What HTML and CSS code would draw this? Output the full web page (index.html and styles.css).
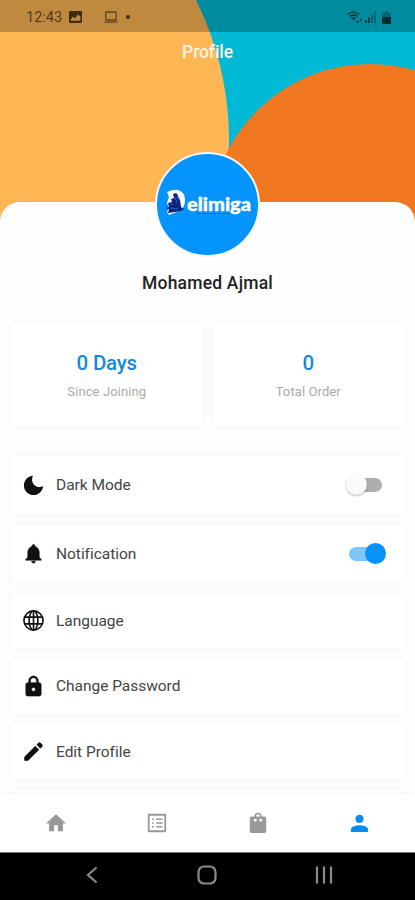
FILE: index.html
```
<!DOCTYPE html>
<html lang="en">
<head>
    <meta charset="UTF-8">
    <title>Profile</title>
    <link rel="stylesheet" href="styles.css">
</head>
<body>
<div class="screen">
    <header class="header">
        <svg class="header-art" viewBox="0 0 415 235" aria-hidden="true">
            <rect width="415" height="235" fill="#00bad5"/>
            <circle cx="-84" cy="140" r="313" fill="#ffb755"/>
            <circle cx="370" cy="224" r="160" fill="#f07821"/>
        </svg>
        <div class="status-bar">
            <span class="status-time">12:43</span>
            <svg class="status-picture" width="13" height="12" viewBox="0 0 13 12">
                <path fill="currentColor" fill-rule="evenodd" d="M1.3 0h10.4Q13 0 13 1.3v9.4Q13 12 11.7 12H1.3Q0 12 0 10.7V1.3Q0 0 1.3 0zM1.8 9.8h9.6V5.5L9 3.6 6 7.4 4 5.6 1.8 8.2z"/>
            </svg>
            <svg class="status-laptop" width="14" height="12" viewBox="0 0 14 12" fill="none" stroke="currentColor" stroke-width="1.3">
                <rect x="1.7" y="1" width="10.6" height="8" rx="1"/>
                <path d="M.5 11h13"/>
            </svg>
            <span class="status-dot"></span>
            <div class="status-right">
                <svg width="17" height="13" viewBox="0 0 17 13" fill="none" stroke="currentColor" stroke-width="1.3">
                    <path d="M.7 3.6Q6.5-1.2 12.3 3.6M2.7 5.5q3.8-3 7.6 0M4.6 7.4q1.9-1.5 3.8 0"/>
                    <path fill="currentColor" stroke="none" d="M5.3 8.2h2.5L6.6 9.8zM9 10h3l-1.5 2.4zM12.4 9.8h3l-1.5-2.4z"/>
                </svg>
                <svg width="11" height="12" viewBox="0 0 11 12" fill="currentColor">
                    <path opacity=".8" d="M0 9h2v3H0zM3 6.500h2V12H3z"/>
                    <path opacity=".4" d="M6 3.500h2V12H6zM9 0h2v12H9z"/>
                </svg>
                <svg class="status-battery" width="9" height="13" viewBox="0 0 9 13" fill="currentColor">
                    <path opacity=".4" d="M3 0h3v1.500h2q1 0 1 1V6H0V2.500q0-1 1-1h2z"/>
                    <path d="M0 6h9v6q0 1-1 1H1q-1 0-1-1z"/>
                </svg>
            </div>
        </div>
        <h1 class="title">Profile</h1>
    </header>

    <main class="sheet">
        <div class="avatar">
            <svg width="92" height="36" viewBox="0 0 92 36">
                <path fill="#fff" fill-rule="evenodd" d="M5 5Q12 2 16 3q7 2 7 10 0 8-6 11-5 2-10 4l-2-3 2-4-2-5 2-6zM12 8v13q6-1 6-7t-6-6z"/>
                <path fill="#10237d" d="M11 7l3-1 2 2-1 3 3 2 1 7 3 2-3 2-6 1-7 1 1-4-4-1 4-1-1-4 4-1-1-3 3-1z"/>
                <path stroke="#1c5fd0" stroke-width="1" fill="none" d="M7 16l4 2M13 10l2 6M8 21l8 1"/>
                <path stroke="#0868c0" stroke-width="1" stroke-dasharray="4 1" d="M35 26.500h32"/>
                <text class="logo-text" x="25" y="23.500" textLength="64" lengthAdjust="spacingAndGlyphs">elimiga</text>
            </svg>
        </div>
        <h2 class="name">Mohamed Ajmal</h2>

        <div class="stats">
            <div class="card stat">
                <span class="stat-value">0 Days</span>
                <span class="stat-label">Since Joining</span>
            </div>
            <div class="card stat">
                <span class="stat-value">0</span>
                <span class="stat-label">Total Order</span>
            </div>
        </div>

        <div class="menu">
            <div class="card menu-item menu-item-switch">
                <svg class="menu-icon" viewBox="0 0 24 24"><path d="M11.500 1.800C9.800 5 10.200 8.700 12.600 11.200c2.400 2.500 6 3.200 9.400 1.600C21.500 18 17.300 22 12 22 6.400 22 2 17.500 2 12 2 6.600 6.200 2.100 11.500 1.800z"/></svg>
                <span class="menu-text">Dark Mode</span>
                <span class="switch"></span>
            </div>
            <div class="card menu-item menu-item-switch">
                <svg class="menu-icon menu-icon-bell" viewBox="0 0 24 24"><path d="M12 22c1.100 0 2-.9 2-2h-4c0 1.100.9 2 2 2zm6-6v-5c0-3.070-1.640-5.640-4.500-6.320V4c0-.83-.67-1.500-1.500-1.500s-1.500.67-1.500 1.500v.68C7.630 5.360 6 7.920 6 11v5l-2 2v1h16v-1l-2-2z"/></svg>
                <span class="menu-text">Notification</span>
                <span class="switch switch-on"></span>
            </div>
            <div class="card menu-item">
                <svg class="menu-icon menu-icon-globe" viewBox="0 0 24 24">
                    <circle cx="12" cy="12" r="10"/>
                    <ellipse cx="12" cy="12" rx="4.600" ry="10"/>
                    <path d="M2.800 8.500h18.400M2.800 15.500h18.400M12 2v20"/>
                </svg>
                <span class="menu-text">Language</span>
            </div>
            <div class="card menu-item">
                <svg class="menu-icon menu-icon-lock" viewBox="0 0 24 24"><path d="M18 8h-1V6c0-2.760-2.240-5-5-5S7 3.240 7 6v2H6c-1.100 0-2 .9-2 2v10c0 1.100.9 2 2 2h12c1.100 0 2-.9 2-2V10c0-1.100-.9-2-2-2zm-6 9c-1.100 0-2-.9-2-2s.9-2 2-2 2 .9 2 2-.9 2-2 2zm3.100-9H8.900V6c0-1.710 1.390-3.100 3.100-3.100s3.100 1.390 3.100 3.100v2z"/></svg>
                <span class="menu-text">Change Password</span>
            </div>
            <div class="card menu-item">
                <svg class="menu-icon menu-icon-pencil" viewBox="0 0 24 24"><path d="M3 17.800V21h3.200L17 10.200 13.800 7zM20.700 6.500c.4-.4.4-1 0-1.400l-1.800-1.800c-.4-.4-1-.4-1.400 0L15.900 4.900l3.200 3.200z"/></svg>
                <span class="menu-text">Edit Profile</span>
            </div>
            <div class="card menu-item"></div>
        </div>
    </main>

    <nav class="tab-bar">
        <svg class="tab" viewBox="0 0 24 24"><path d="M10 21v-6.500h4V21h5.500v-8.500H23L12 2.500 1 12.500h3.500V21z"/></svg>
        <svg class="tab" viewBox="0 0 24 24"><path d="M20 4v16H4V4h16m1.100-2H2.900c-.5 0-.9.4-.9.900v18.200c0 .4.4.9.900.9h18.200c.4 0 .9-.5.900-.9V2.900c0-.5-.5-.9-.9-.9zM11 7h7v1.700h-7V7zm0 4.100h7v1.700h-7v-1.700zm0 4.200h7V17h-7zM6.500 7h2v1.700h-2zm0 4.100h2v1.700h-2zm0 4.200h2V17h-2z"/></svg>
        <svg class="tab" viewBox="0 0 24 24"><path fill-rule="evenodd" d="M5 5h3C8 2.500 9.700.8 12 .8S16 2.500 16 5h3q2 0 2 2V21q0 2-2 2H5q-2 0-2-2V7q0-2 2-2zM9.700 5h4.600C14.300 3.500 13.400 2.500 12 2.500S9.700 3.500 9.700 5zM7.500 7.500V9a1.500 1.500 0 0 0 3 0V7.500zM13.500 7.500V9a1.500 1.500 0 0 0 3 0V7.500z"/></svg>
        <svg class="tab tab-active" viewBox="0 0 24 24"><path d="M12 11.500c2.400 0 4.300-1.900 4.300-4.300S14.400 2.900 12 2.900 7.700 4.800 7.700 7.200s1.900 4.300 4.300 4.300zm0 2.200c-3 0-9 1.400-9 4.400v2.700h18v-2.700c0-3-6-4.400-9-4.400z"/></svg>
    </nav>

    <div class="system-bar">
        <svg width="12" height="18" viewBox="0 0 12 18"><path d="M10.500 1.500L2 9l8.500 7.500"/></svg>
        <svg width="20" height="20" viewBox="0 0 20 20"><rect x="1.500" y="1.500" width="17" height="17" rx="5.500"/></svg>
        <svg width="18" height="18" viewBox="0 0 18 18"><path d="M2 .5v17M9 .5v17M16 .5v17"/></svg>
    </div>
</div>
</body>
</html>
```
FILE: styles.css
```
body {
    margin: 0;
    font-family: Roboto, "Liberation Sans", sans-serif;
    background-color: #fff;
}

.screen {
    display: flex;
    flex-direction: column;
    width: 415px;
    height: 900px;
    overflow: hidden;
}

.header {
    position: relative;
    flex: none;
    height: 202px;
}

.header-art {
    position: absolute;
    top: 0;
    left: 0;
    width: 415px;
    height: 235px;
}

.status-bar {
    position: relative;
    display: flex;
    align-items: center;
    height: 32px;
    padding: 2px 24px 0 26px;
    box-sizing: border-box;
    background-color: rgba(0, 0, 0, 0.25);
    color: rgba(0, 0, 0, 0.68);
}

.status-time {
    width: 43px;
    font-size: 14.5px;
    color: rgba(0, 0, 0, 0.6);
}

.status-laptop {
    margin-left: 22px;
    opacity: 0.75;
}

.status-dot {
    width: 4px;
    height: 4px;
    margin-left: 8px;
    border-radius: 50%;
    background-color: #3b2a12;
}

.status-right {
    display: flex;
    align-items: center;
    gap: 1px;
    margin-left: auto;
}

.status-battery {
    margin-left: 5px;
}

.title {
    position: relative;
    margin: 0;
    padding-top: 10px;
    text-align: center;
    font-size: 17.5px;
    font-weight: 500;
    line-height: 21px;
    letter-spacing: -0.1px;
    color: #fff4e6;
}

.sheet {
    position: relative;
    flex: 1;
    min-height: 0;
    border-radius: 20px 20px 0 0;
    background-color: #fefefe;
}

.avatar {
    display: flex;
    align-items: center;
    justify-content: center;
    width: 101px;
    height: 101px;
    margin: -50px auto 0;
    border: 2px solid #f6f8fa;
    border-radius: 50%;
    background-color: #0593fc;
}

.logo-text {
    font-family: Lato, "Open Sans", sans-serif;
    font-size: 19px;
    font-weight: 900;
    fill: #fff;
    stroke: #fff;
    stroke-width: 0.4px;
}

.name {
    margin: 14px 0 0;
    text-align: center;
    font-size: 17.5px;
    font-weight: 500;
    line-height: 24px;
    letter-spacing: 0.2px;
    color: #222;
}

.card {
    border-radius: 4px;
    background-color: #fff;
    box-shadow: 0 0 5px 2px rgba(0, 0, 0, 0.03);
}

.stats {
    display: flex;
    gap: 10px;
    margin: 29px 11px 0;
}

.stat {
    display: flex;
    flex: 1;
    flex-direction: column;
    align-items: center;
    height: 102px;
}

.stat-value {
    margin-top: 26px;
    font-size: 20.5px;
    font-weight: 500;
    line-height: 26px;
    letter-spacing: -0.2px;
    color: #1689d8;
}

.stat-label {
    margin-top: 8px;
    font-size: 13px;
    line-height: 16px;
    letter-spacing: 0.1px;
    color: #aaa;
}

.menu {
    display: flex;
    flex-direction: column;
    gap: 10.5px;
    margin: 30px 11px 0;
}

.menu-item {
    display: flex;
    flex: none;
    align-items: center;
    height: 55px;
    padding: 0 18px 0 11px;
    box-sizing: border-box;
}

.menu-item-switch {
    height: 58px;
}

.menu-icon {
    width: 23px;
    height: 23px;
    margin-right: 11px;
    fill: #111;
}

.menu-icon-bell,
.menu-icon-lock {
    stroke: #111;
    stroke-width: 0.6;
}

.menu-icon-globe {
    fill: none;
    stroke: #111;
    stroke-width: 1.7;
}

.menu-icon-pencil {
    stroke: #111;
    stroke-width: 1.2;
    stroke-linejoin: round;
}

.menu-text {
    font-size: 15.5px;
    letter-spacing: -0.03px;
    color: #444;
}

.switch {
    position: relative;
    width: 34px;
    height: 14px;
    margin-right: 4px;
    margin-left: auto;
    border-radius: 7px;
    background-color: #aeaeae;
}

.switch::after {
    content: "";
    position: absolute;
    top: -4px;
    left: -2px;
    width: 21px;
    height: 21px;
    border-radius: 50%;
    background-color: #fafafa;
    box-shadow: 0 1px 2px rgba(0, 0, 0, 0.3);
}

.switch-on {
    margin-right: 3px;
    background-color: #7ec5fb;
}

.switch-on::after {
    left: 16px;
    background-color: #0792fa;
    box-shadow: none;
}

.tab-bar {
    position: relative;
    display: flex;
    flex: none;
    align-items: center;
    justify-content: space-around;
    height: 58px;
    padding: 0 4px 0 5px;
    background-color: #fff;
    box-shadow: 0 0 3px rgba(0, 0, 0, 0.08);
}

.tab {
    width: 22px;
    height: 22px;
    fill: #999;
}

.tab-active {
    width: 23px;
    height: 23px;
    fill: #078cf0;
}

.system-bar {
    position: relative;
    display: flex;
    flex: none;
    align-items: center;
    justify-content: space-between;
    height: 48px;
    padding: 0 82px 3px 86px;
    box-sizing: border-box;
    border-top: 1px solid #777;
    background-color: #000;
}

.system-bar svg {
    fill: none;
    stroke: #8a8a8a;
    stroke-width: 2.2;
}
```
